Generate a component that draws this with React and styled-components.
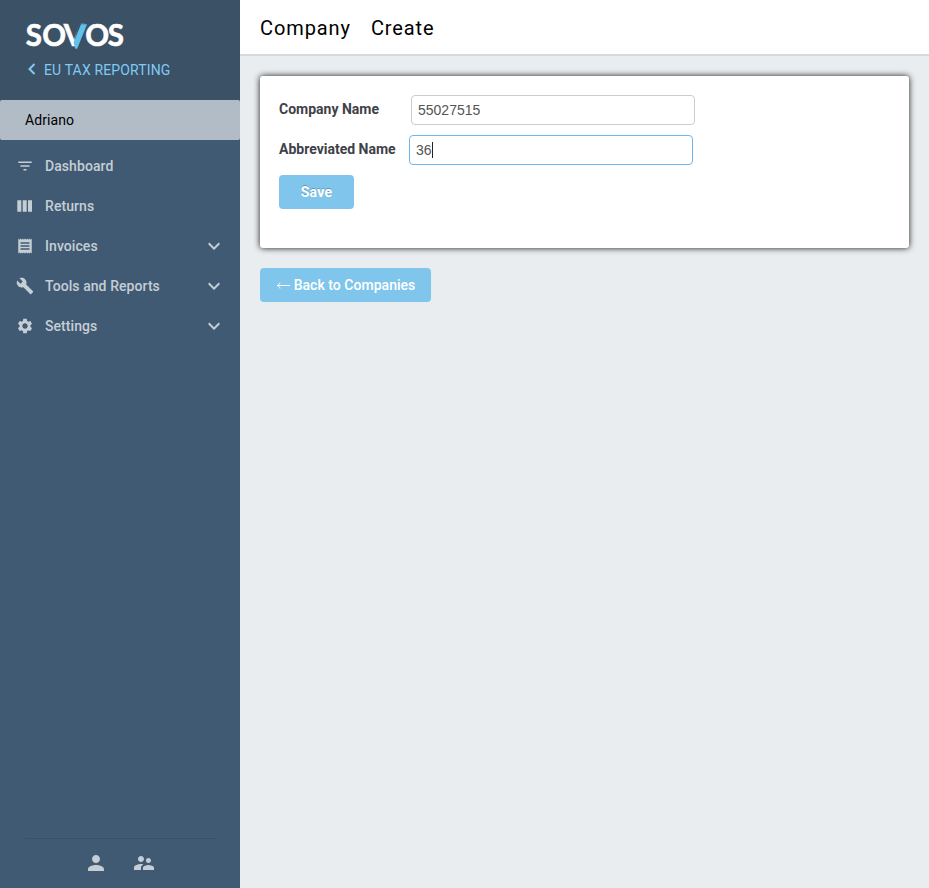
import React from 'react';
import styled, { createGlobalStyle } from 'styled-components';
import {
  MdFilterList,
  MdReceipt,
  MdBuild,
  MdSettings,
  MdPerson,
  MdSupervisorAccount,
  MdExpandMore,
} from 'react-icons/md';

const GlobalStyle = createGlobalStyle`
  * { box-sizing: border-box; }
  body { margin: 0; font-family: Roboto, sans-serif; font-size: 14px; }
`;

const Page = styled.div`
  display: flex;
  height: 888px;
  background: #e9edf0;
`;

const Sidebar = styled.aside`
  display: flex;
  flex-direction: column;
  width: 240px;
  flex: none;
  background: #415a73;
`;

const Brand = styled.header`
  height: 100px;
  padding: 20px 0 0 24px;
  background: #3b5166;
`;

const LogoSvg = styled.svg`
  display: block;
  width: 104px;
  height: 32px;
  overflow: visible;
`;

const LogoText = styled.text`
  font-family: Lato, sans-serif;
  font-weight: 700;
  font-size: 29.5px;
  fill: #fff;
  stroke: #fff;
  stroke-width: 0.6px;
`;

const ProductLink = styled.a`
  display: flex;
  align-items: center;
  gap: 8px;
  height: 20px;
  margin-top: 8px;
  padding-left: 4px;
  line-height: 20px;
  letter-spacing: 0.14px;
  color: #80caf3;
`;

const BackChevron = styled.svg`
  width: 8px;
  height: 12px;
  margin-top: -3px;
`;

const Account = styled.div`
  height: 40px;
  padding-left: 25px;
  border-radius: 2px;
  line-height: 40px;
  letter-spacing: 0.1px;
  color: #000;
  background: #b2bcc7;
`;

const Nav = styled.nav`
  display: flex;
  flex-direction: column;
  flex: 1;
  padding-top: 6px;
`;

const NavItem = styled.a`
  display: grid;
  grid-template-columns: 18px 1fr 24px;
  column-gap: 11px;
  align-items: center;
  height: 40px;
  padding: 0 14px 0 16px;
  font-weight: 500;
  letter-spacing: 0.07px;
  color: #c5ced5;
`;

const SidebarFooter = styled.footer`
  display: flex;
  justify-content: center;
  gap: 24px;
  height: 50px;
  margin: 0 23px 0 25px;
  padding: 12px 3px 0 0;
  border-top: 1px solid #38516a;
  color: #c5ced5;
`;

const Main = styled.main`
  flex: 1;
  min-width: 0;
`;

const TopBar = styled.header`
  display: flex;
  gap: 20px;
  height: 56px;
  padding-left: 20px;
  border-bottom: 2px solid #d5dadf;
  background: #fff;
  font-size: 20px;
  line-height: 56px;
  letter-spacing: 0.9px;
  color: #000;
`;

const Content = styled.div`
  padding: 20px 20px 0;
`;

const Card = styled.form`
  height: 172px;
  padding: 19px;
  border-radius: 3px;
  background: #fff;
  box-shadow: 0 0 6px rgba(0, 0, 0, 0.9);
`;

const Field = styled.div`
  display: flex;
  gap: 10px;
  height: 40px;
`;

const Label = styled.label`
  width: ${(p) => p.$width}px;
  height: 28px;
  line-height: 28px;
  font-weight: 700;
  color: #3e4148;
  white-space: nowrap;
`;

const InputBox = styled.div`
  display: flex;
  align-items: center;
  width: 284px;
  height: 30px;
  padding-left: 6px;
  border: 1px solid ${(p) => (p.$focused ? '#72b5ed' : '#ccc')};
  border-radius: 4px;
  color: #555;
`;

const InputText = styled.span`
  font-family: 'Liberation Sans', Arial, sans-serif;
  line-height: 20px;
`;

const Caret = styled.span`
  width: 1px;
  height: 16px;
  background: #222;
`;

const Button = styled.button`
  display: block;
  width: ${(p) => p.$width}px;
  height: 34px;
  padding: 0;
  border: 0;
  border-radius: 4px;
  background: #80c6ec;
  color: #fff;
  font-family: Roboto, sans-serif;
  font-size: 14px;
  font-weight: ${(p) => (p.$strong ? 700 : 500)};
  letter-spacing: ${(p) => (p.$strong ? 0.25 : 0.03)}px;
  text-shadow: ${(p) => (p.$strong ? '0 -1px 0 rgba(0, 0, 0, 0.25)' : 'none')};
`;

const BackRow = styled.div`
  padding-top: 20px;
`;

const BackLabel = styled.span`
  display: flex;
  align-items: center;
  justify-content: center;
  gap: 4px;
`;

const Columns = () => (
  <svg width="18" height="18" viewBox="0 0 18 18" fill="currentColor">
    <path d="M1.3 3.2h4v11.5h-4zM6.7 3.2h4v11.5h-4zM12 3.2h4v11.5h-4z" />
  </svg>
);

const Logo = () => (
  <LogoSvg viewBox="24 20 104 32" aria-label="Sovos">
    <LogoText x="25.8 42.2 63.8 85.2 107.8" y="46">SOVOS</LogoText>
    {/* gap between the white arm and the blue slash */}
    <path d="M79 23.5H86.5L77 47H76L74.6 39Z" fill="#3b5166" />
    <path d="M81 24.2H87L77.2 48.8H75.2L73.6 42.6Z" fill="#62c1eb" />
  </LogoSvg>
);

const items = [
  { label: 'Dashboard', icon: <MdFilterList size={18} /> },
  { label: 'Returns', icon: <Columns /> },
  { label: 'Invoices', icon: <MdReceipt size={18} />, expandable: true },
  { label: 'Tools and Reports', icon: <MdBuild size={18} />, expandable: true },
  { label: 'Settings', icon: <MdSettings size={18} />, expandable: true },
];

export default function App() {
  return (
    <>
      <GlobalStyle />
      <Page>
        <Sidebar>
          <Brand>
            <Logo />
            <ProductLink>
              <BackChevron viewBox="0 0 8 12" fill="none" stroke="currentColor" strokeWidth="2">
                <path d="M6.5 1L1.5 6L6.5 11" />
              </BackChevron>
              EU TAX REPORTING
            </ProductLink>
          </Brand>
          <Account>Adriano</Account>
          <Nav>
            {items.map((item) => (
              <NavItem key={item.label}>
                {item.icon}
                <span>{item.label}</span>
                {item.expandable && <MdExpandMore size={24} />}
              </NavItem>
            ))}
          </Nav>
          <SidebarFooter>
            <MdPerson size={24} />
            <MdSupervisorAccount size={24} />
          </SidebarFooter>
        </Sidebar>
        <Main>
          <TopBar>
            <span>Company</span>
            <span>Create</span>
          </TopBar>
          <Content>
            <Card>
              <Field>
                <Label $width={122}>Company Name</Label>
                <InputBox><InputText>55027515</InputText></InputBox>
              </Field>
              <Field>
                <Label $width={120}>Abbreviated Name</Label>
                <InputBox $focused><InputText>36</InputText><Caret /></InputBox>
              </Field>
              <Button type="button" $width={75} $strong>Save</Button>
            </Card>
            <BackRow>
              <Button type="button" $width={171}>
                <BackLabel>
                  <svg width="14" height="8" viewBox="0 0 14 8" fill="none" stroke="currentColor">
                    <path d="M1 4.5H14M4 1.5C3.5 3 2.5 4 1 4.5C2.5 5 3.5 6 4 7.5" />
                  </svg>
                  Back to Companies
                </BackLabel>
              </Button>
            </BackRow>
          </Content>
        </Main>
      </Page>
    </>
  );
}
